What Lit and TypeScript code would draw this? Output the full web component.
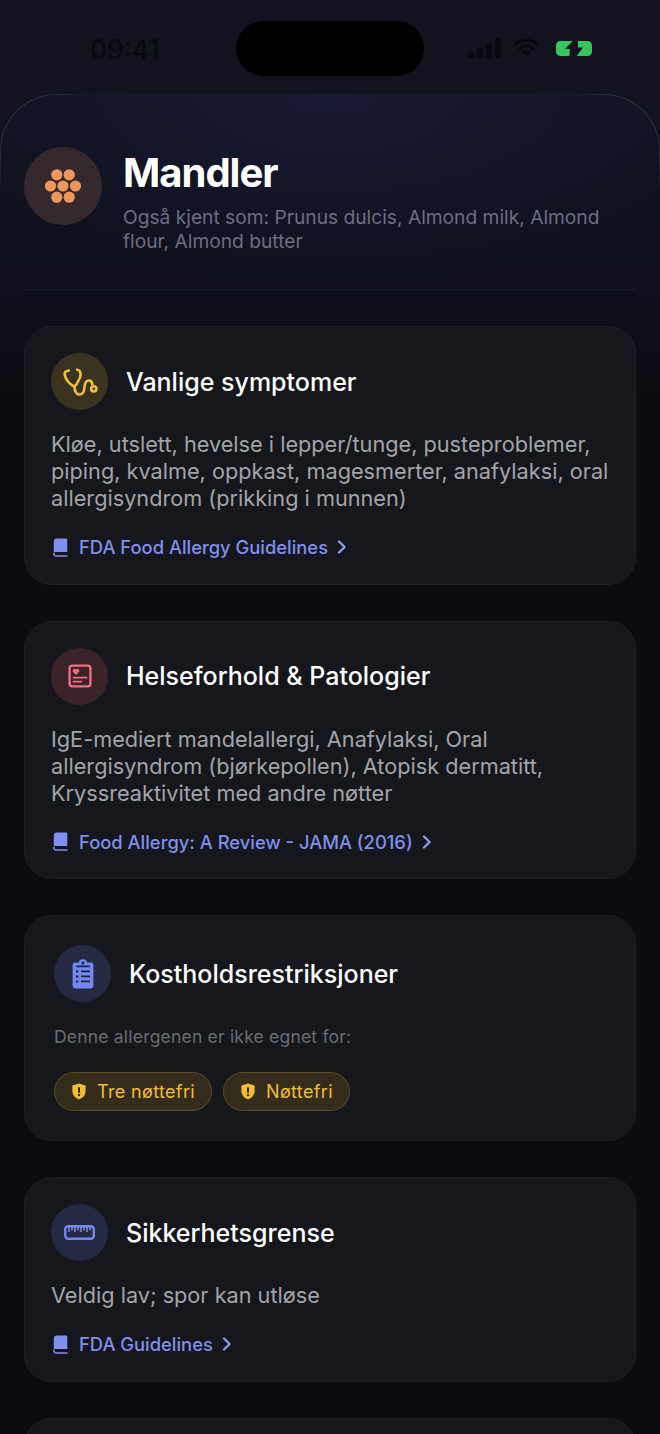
import {LitElement, html, css, svg} from 'lit';
import {customElement} from 'lit/decorators.js';

const bookIcon = html`
    <svg class="book" width="15" height="19" viewBox="0 0 15 19">
        <path fill="currentColor" d="M3.2 0.5H13a1.3 1.3 0 0 1 1.3 1.3V14H3a1.9 1.9 0 0 0-2.2 1V3a2.6 2.6 0 0 1 2.4-2.5Z"/>
        <path fill="none" stroke="currentColor" stroke-width="1.5" stroke-linecap="round" d="M.8 15.4a2.4 2.4 0 0 0 2.4 2.5H14"/>
    </svg>
`;

const chevron = html`
    <svg width="10" height="14" viewBox="0 0 10 14">
        <path fill="none" stroke="currentColor" stroke-width="2.3" stroke-linecap="round" stroke-linejoin="round" d="M2 1.5 7.6 7 2 12.5"/>
    </svg>
`;

const shieldIcon = html`
    <svg width="14" height="17" viewBox="0 0 14 17">
        <path fill="#f4bd33" d="M7 0.5 13.6 2.6V8c0 4-2.8 6.9-6.6 8.5C3.2 14.9.4 12 .4 8V2.6Z"/>
        <rect x="6" y="4" width="2" height="6" rx="1" fill="#33291a"/>
        <circle cx="7" cy="12" r="1.2" fill="#33291a"/>
    </svg>
`;

const stethoscope = html`
    <svg width="36" height="30" viewBox="0 0 36 30">
        <g fill="none" stroke="#f4bd33" stroke-width="2.6" stroke-linecap="round" stroke-linejoin="round">
            <path d="M6.8 3.5 3.8 4.4Q2 6 3 9 4 12 6 14.5 9 18 11 19 13.5 19.5 15 16.5L18 10.5Q19.5 7 17.5 3.6L15 2.6"/>
            <path d="M12.5 19.5Q12.8 27.5 17.5 27.5 22 27.5 22.5 20 23 13.5 27 13.5 30 13.5 30.4 17.5"/>
            <circle cx="31.8" cy="21.8" r="2.6"/>
        </g>
    </svg>
`;

const heartCard = html`
    <svg width="24" height="24" viewBox="0 0 24 24">
        <rect x="1.6" y="1.6" width="20.8" height="20.8" rx="2.6" fill="none" stroke="#ee6f80" stroke-width="2.4"/>
        <path fill="#ee6f80" d="M8 11 4.9 7.8a1.9 1.9 0 0 1 3.1-2.2 1.9 1.9 0 0 1 3.1 2.2Z"/>
        <path stroke="#ee6f80" stroke-width="1.8" stroke-linecap="round" d="M5.5 13.6H18.5M5.5 17.6H13.5"/>
    </svg>
`;

const clipboard = html`
    <svg width="22" height="30" viewBox="0 0 22 30">
        <path fill="#7088f6" d="M3 3.6H7a4 3.4 0 0 1 8 0H19a2.4 2.4 0 0 1 2.4 2.4V27a2.4 2.4 0 0 1-2.4 2.4H3A2.4 2.4 0 0 1 .6 27V6A2.4 2.4 0 0 1 3 3.6Z"/>
        <circle cx="11" cy="4" r="1.5" fill="#1f2338"/>
        <path stroke="#1f2338" stroke-width="1.6" d="M4.2 7.4H17.8M9 12.4H18M9 17.4H18M9 22.4H18"/>
        <path stroke="#1f2338" stroke-width="2" d="M4 12.4H6.4M4 17.4H6.4M4 22.4H6.4"/>
    </svg>
`;

const ruler = html`
    <svg width="31" height="15" viewBox="0 0 31 15">
        <rect x="1.2" y="1.2" width="28.6" height="12.6" rx="3" fill="none" stroke="#7088f6" stroke-width="2.4"/>
        <path stroke="#a9b6f8" stroke-width="1.1" d="M5 2v5M8 2v3.5M11 2v5M14 2v3.5M17 2v5M20 2v3.5M23 2v5M26 2v3.5"/>
    </svg>
`;

const almond = [[-6.2, -11.2], [6.2, -11.2], [-12.5, 0], [0, 0], [12.5, 0], [-6.2, 11.2], [6.2, 11.2]];

@customElement('app-root')
export class AppRoot extends LitElement {
    static styles = css`
        :host {
            display: block;
            width: 660px;
            height: 1434px;
            overflow: hidden;
            background: #12131f;
            font-family: Inter, "Liberation Sans", sans-serif;
        }

        .status {
            height: 94px;
            padding: 21px 60px 0 90px;
            box-sizing: border-box;
            display: flex;
            justify-content: space-between;
            align-items: flex-start;
        }

        .time {
            width: 146px;
            margin-top: 13px;
            font-size: 26.5px;
            line-height: 30px;
            font-weight: 500;
            color: #08090e;
        }

        .island {
            width: 188px;
            height: 55px;
            border-radius: 28px;
            background: #000;
        }

        .indicators {
            flex: 1;
            height: 22px;
            margin-top: 16px;
            padding-left: 44px;
            display: flex;
            align-items: center;
            gap: 11px;
        }

        .battery {
            margin-left: 5px;
        }

        .sheet {
            position: relative;
            height: 1340px;
            box-sizing: border-box;
            padding: 0 24px;
            border-radius: 56px 56px 0 0;
            background:
                radial-gradient(ellipse 420px 190px at 50% 0, #171a33 0, rgba(23, 26, 51, 0) 100%),
                linear-gradient(180deg, #11121f 0, #0f101c 190px, #0b0c11 300px);
        }

        /* hairline only shows round the two top corners */
        .sheet::before {
            content: "";
            position: absolute;
            top: 0;
            left: 0;
            right: 0;
            height: 110px;
            box-sizing: border-box;
            border: 1px solid #34364a;
            border-bottom: 0;
            border-radius: 56px 56px 0 0;
            -webkit-mask-image:
                linear-gradient(90deg, #000 0, #000 40px, transparent 90px, transparent 570px, #000 620px),
                linear-gradient(180deg, #000 40px, transparent 100px);
            -webkit-mask-composite: source-in;
            mask-composite: intersect;
        }

        .header {
            height: 196px;
            box-sizing: border-box;
            padding-top: 53px;
            display: flex;
            gap: 21px;
            border-bottom: 1px solid #1b1c2a;
        }

        .avatar {
            width: 78px;
            height: 78px;
            flex: none;
            border-radius: 50%;
            background: #36292e;
            display: flex;
            align-items: center;
            justify-content: center;
        }

        h1 {
            margin: 2px 0 0;
            font-size: 40px;
            line-height: 48px;
            font-weight: 700;
            letter-spacing: -1px;
            color: #fff;
        }

        .aka {
            margin: 9px 0 0;
            font-size: 19.2px;
            line-height: 23.6px;
            color: #6d6e80;
        }

        .cards {
            padding-top: 36px;
            display: flex;
            flex-direction: column;
            gap: 36px;
        }

        .card {
            box-sizing: border-box;
            padding: 26px 26px 24.7px;
            border: 1px solid #1e1f27;
            border-radius: 28px;
            background: #16171c;
        }

        .card.roomy {
            padding: 29px;
            height: 226px;
        }

        .card.tail {
            height: 120px;
        }

        .card-head {
            display: flex;
            align-items: center;
            gap: 18px;
        }

        .icon {
            width: 57px;
            height: 57px;
            flex: none;
            border-radius: 50%;
            display: flex;
            align-items: center;
            justify-content: center;
        }

        .yellow { background: #3a3320; }
        .red { background: #3b2329; }
        .blue { background: #242a42; }

        h2 {
            margin: 0;
            font-size: 25px;
            line-height: 30px;
            font-weight: 500;
            color: #fff;
        }

        .body {
            margin: 21px 0 0;
            font-size: 21.7px;
            line-height: 27px;
            color: #a3a4a8;
        }

        .link {
            margin-top: 23px;
            display: flex;
            align-items: center;
            gap: 11px;
            font-size: 18.37px;
            line-height: 24px;
            font-weight: 500;
            color: #7f90ee;
        }

        .link svg:last-child {
            color: #8d9cf2;
            margin-left: -2px;
        }

        .book {
            margin-left: 2px;
        }

        .note {
            margin: 23px 0 0;
            font-size: 17.5px;
            line-height: 24px;
            letter-spacing: 0.2px;
            color: #6b6c72;
        }

        .chips {
            margin-top: 23px;
            display: flex;
            gap: 11px;
        }

        .chip {
            height: 39px;
            box-sizing: border-box;
            padding: 0 16px 0 17px;
            display: flex;
            align-items: center;
            gap: 11px;
            border: 1px solid #5c4d26;
            border-radius: 20px;
            background: #352d1c;
            font-size: 18px;
            letter-spacing: 0.35px;
            color: #f4bd33;
        }
    `;

    private renderLink(label: string) {
        return html`<div class="link">${bookIcon}<span>${label}</span>${chevron}</div>`;
    }

    private renderCard(title: string, tone: string, icon: unknown, text: string, link: string) {
        return html`
            <section class="card">
                <div class="card-head">
                    <div class="icon ${tone}">${icon}</div>
                    <h2>${title}</h2>
                </div>
                <p class="body">${text}</p>
                ${this.renderLink(link)}
            </section>
        `;
    }

    render() {
        return html`
            <div class="status">
                <div class="time">09:41</div>
                <div class="island"></div>
                <div class="indicators">
                    <svg width="34" height="20" viewBox="0 0 34 20">
                        <g fill="#08090e">
                            <rect x="0" y="14" width="6" height="6" rx="1.5"/>
                            <rect x="9" y="10" width="6" height="10" rx="1.5"/>
                            <rect x="18" y="5" width="6" height="15" rx="1.5"/>
                            <rect x="27" y="0" width="6" height="20" rx="1.5"/>
                        </g>
                    </svg>
                    <svg width="27" height="20" viewBox="0 0 28 22" preserveAspectRatio="none">
                        <g fill="none" stroke="#08090e" stroke-width="3.2">
                            <path d="M1.6 7.6a17.5 17.5 0 0 1 24.8 0"/>
                            <path d="M6 12.4a11.3 11.3 0 0 1 16 0"/>
                        </g>
                        <path fill="#08090e" d="M9.6 15.6a6.4 6.4 0 0 1 8.8 0L14 21Z"/>
                    </svg>
                    <svg class="battery" width="36" height="15" viewBox="0 0 36 15">
                        <rect width="36" height="15" rx="4.5" fill="#35c75a"/>
                        <path fill="#12131f" d="M16.7 0 9 8H14L13.3 15H20.7L27 6.5H22V0Z"/>
                    </svg>
                </div>
            </div>

            <main class="sheet">
                <header class="header">
                    <div class="avatar">
                        <svg width="38" height="36" viewBox="-19 -18 38 36">
                            ${almond.map(([x, y]) => svg`<circle cx=${x} cy=${y} r="5.6" fill="#ee965c"/>`)}
                        </svg>
                    </div>
                    <div>
                        <h1>Mandler</h1>
                        <p class="aka">Også kjent som: Prunus dulcis, Almond milk, Almond flour, Almond butter</p>
                    </div>
                </header>

                <div class="cards">
                    ${this.renderCard(
                        'Vanlige symptomer',
                        'yellow',
                        stethoscope,
                        'Kløe, utslett, hevelse i lepper/tunge, pusteproblemer, piping, kvalme, oppkast, magesmerter, anafylaksi, oral allergisyndrom (prikking i munnen)',
                        'FDA Food Allergy Guidelines',
                    )}
                    ${this.renderCard(
                        'Helseforhold & Patologier',
                        'red',
                        heartCard,
                        'IgE-mediert mandelallergi, Anafylaksi, Oral allergisyndrom (bjørkepollen), Atopisk dermatitt, Kryssreaktivitet med andre nøtter',
                        'Food Allergy: A Review - JAMA (2016)',
                    )}
                    <section class="card roomy">
                        <div class="card-head">
                            <div class="icon blue">${clipboard}</div>
                            <h2>Kostholdsrestriksjoner</h2>
                        </div>
                        <p class="note">Denne allergenen er ikke egnet for:</p>
                        <div class="chips">
                            <span class="chip">${shieldIcon}Tre nøttefri</span>
                            <span class="chip">${shieldIcon}Nøttefri</span>
                        </div>
                    </section>
                    ${this.renderCard(
                        'Sikkerhetsgrense',
                        'blue',
                        ruler,
                        'Veldig lav; spor kan utløse',
                        'FDA Guidelines',
                    )}
                    <section class="card tail"></section>
                </div>
            </main>
        `;
    }
}
